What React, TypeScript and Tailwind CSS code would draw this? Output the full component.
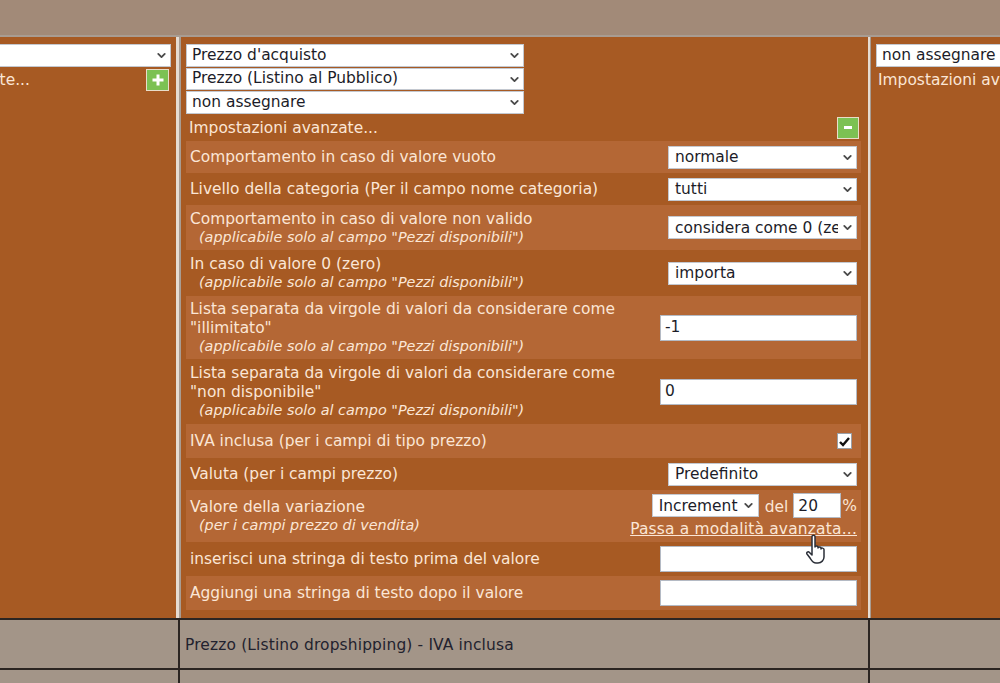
import { ChevronDown } from "lucide-react";
import type { ReactNode } from "react";

const font = "font-['DejaVu_Sans',sans-serif]";

function Select({ value, className, inset }: { value: string; className: string; inset?: boolean }) {
  return (
    <div
      className={`flex shrink-0 items-center overflow-hidden border border-[#c3c8d0] bg-white text-[#1c1c28] ${className}`}
    >
      <span className={`min-w-0 flex-1 overflow-hidden whitespace-nowrap pl-[5px] ${inset ? "pt-[2px] pl-[6px]" : ""}`}>
        {value}
      </span>
      <span className="flex w-[18px] shrink-0 justify-center bg-white">
        <ChevronDown size={13} strokeWidth={3.4} className="text-[#4a4a4a]" />
      </span>
    </div>
  );
}

function TextBox({ value = "", className }: { value?: string; className: string }) {
  return (
    <div className={`flex shrink-0 items-center border border-[#b4bac4] bg-white pl-[4px] text-[#1c1c28] ${className}`}>
      {value}
    </div>
  );
}

function Note({ children }: { children: ReactNode }) {
  return <div className="pl-[9px] text-[14.4px] italic leading-[17px]">{children}</div>;
}

function Row({
  light,
  height,
  children,
  control,
}: {
  light?: boolean;
  height: string;
  children: ReactNode;
  control: ReactNode;
}) {
  return (
    <div className={`flex items-center justify-between pl-[4px] pr-[4px] ${height} ${light ? "bg-[#b46735]" : ""}`}>
      <div className="w-[450px] leading-[19px]">{children}</div>
      {control}
    </div>
  );
}

const applicable = '(applicabile solo al campo "Pezzi disponibili")';

export default function App() {
  return (
    <div className={`h-[683px] w-[1000px] overflow-hidden bg-[#a39588] text-[15.45px] ${font}`}>
      <div className="h-[37px] border-b-2 border-[#a89c92] bg-[#a28a78]" />
      <div className="flex h-[581px] text-[#fbe6d6]">
        <div className="flex w-[176px] shrink-0 flex-col bg-[#a75a23] pt-[7px]">
          <Select value="" className="ml-[-10px] h-[23px] w-[181px]" />
          <div className="flex items-center justify-between pr-[7px] pt-[2px]">
            <span className="ml-[-159px] whitespace-nowrap leading-[21px]">Impostazioni avanzate...</span>
            <span className="flex h-[22px] w-[23px] items-center justify-center border border-[#e9ddc9] bg-[#7cc153]">
              <svg width="14" height="14" viewBox="0 0 14 14">
                <path d="M7 1.5v11M1.5 7h11" stroke="#fff" strokeWidth="3" />
              </svg>
            </span>
          </div>
        </div>
        <div className="w-[5px] shrink-0 border-r-2 border-[#a89c92] bg-[#e6dcd2]" />
        <div className="flex w-[687px] shrink-0 flex-col bg-[#a75a23] pl-[5px] pr-[7px] pt-[7px]">
          <div className="flex flex-col gap-px">
            <Select value="Prezzo d'acquisto" className="h-[23px] w-[338px]" />
            <Select value="Prezzo (Listino al Pubblico)" className="h-[22px] w-[338px]" />
            <Select value="non assegnare" className="h-[23px] w-[338px]" />
          </div>
          <div className="flex h-[27px] items-center justify-between pl-[3px] pr-[2px]">
            <span className="pt-[2px]">Impostazioni avanzate...</span>
            <span className="flex h-[22px] w-[22px] items-center justify-center border border-[#e9ddc9] bg-[#7cc153]">
              <span className="h-[3px] w-[8px] bg-white" />
            </span>
          </div>
          <Row light height="h-[32px]" control={<Select inset value="normale" className="h-[23px] w-[189px]" />}>
            Comportamento in caso di valore vuoto
          </Row>
          <Row height="h-[32px]" control={<Select inset value="tutti" className="h-[23px] w-[189px]" />}>
            Livello della categoria (Per il campo nome categoria)
          </Row>
          <Row light height="h-[45px]" control={<Select inset value="considera come 0 (zero)" className="h-[23px] w-[189px]" />}>
            <div>Comportamento in caso di valore non valido</div>
            <Note>{applicable}</Note>
          </Row>
          <Row height="h-[46px]" control={<Select inset value="importa" className="h-[23px] w-[189px]" />}>
            <div>In caso di valore 0 (zero)</div>
            <Note>{applicable}</Note>
          </Row>
          <Row light height="h-[63px]" control={<TextBox value="-1" className="h-[26px] w-[197px]" />}>
            <div>Lista separata da virgole di valori da considerare come "illimitato"</div>
            <Note>{applicable}</Note>
          </Row>
          <Row height="h-[65px]" control={<TextBox value="0" className="h-[26px] w-[197px]" />}>
            <div>Lista separata da virgole di valori da considerare come "non disponibile"</div>
            <Note>{applicable}</Note>
          </Row>
          <Row
            light
            height="h-[34px]"
            control={
              <span className="mr-[5px] flex h-[16px] w-[15px] items-center justify-center border border-[#9aa0a8] bg-white">
                <svg width="13" height="13" viewBox="0 0 13 13">
                  <path d="M2 7l3 3 6-7" fill="none" stroke="#111" strokeWidth="2.4" />
                </svg>
              </span>
            }
          >
            IVA inclusa (per i campi di tipo prezzo)
          </Row>
          <Row height="h-[32px]" control={<Select inset value="Predefinito" className="h-[23px] w-[189px]" />}>
            Valuta (per i campi prezzo)
          </Row>
          <Row
            light
            height="h-[52px]"
            control={
              <div className="flex flex-col items-end">
                <div className="flex items-center">
                  <Select inset value="Increment" className="h-[23px] w-[107px]" />
                  <span className="ml-[6px] pt-[3px]">del</span>
                  <TextBox value="20" className="ml-[5px] h-[25px] w-[48px] pt-[1px]" />
                  <span className="ml-[1px] pt-[1px]">%</span>
                </div>
                <span className="whitespace-nowrap pt-[1px] leading-[19px] tracking-[0.2px] underline">
                  Passa a modalità avanzata...
                </span>
              </div>
            }
          >
            <div>Valore della variazione</div>
            <Note>(per i campi prezzo di vendita)</Note>
          </Row>
          <Row height="h-[34px]" control={<TextBox className="h-[26px] w-[197px]" />}>
            inserisci una stringa di testo prima del valore
          </Row>
          <Row light height="h-[34px]" control={<TextBox className="h-[26px] w-[197px]" />}>
            Aggiungi una stringa di testo dopo il valore
          </Row>
        </div>
        <div className="w-[3px] shrink-0 border-r border-[#a89c92] bg-[#e6dcd2]" />
        <div className="min-w-0 flex-1 overflow-hidden bg-[#a75a23] pl-[5px] pt-[7px]">
          <Select value="non assegnare" className="h-[23px] w-[338px]" />
          <div className="whitespace-nowrap pl-[2px] pt-[3px] leading-[21px]">Impostazioni avanzate...</div>
        </div>
      </div>
      <div className="flex h-[52px] border-y-2 border-y-[#2b2522] bg-[#a39588] text-[#22222e]">
        <div className="w-[180px] shrink-0 border-r-2 border-[#2b2522]" />
        <div className="flex w-[690px] shrink-0 items-center border-r-2 border-[#2b2522] pl-[5px] pt-[3px] tracking-[0.15px]">
          Prezzo (Listino dropshipping) - IVA inclusa
        </div>
      </div>
      <div className="flex h-[13px] bg-[#a39588]">
        <div className="w-[180px] shrink-0 border-r-2 border-[#2b2522]" />
        <div className="w-[690px] shrink-0 border-r-2 border-[#2b2522]" />
      </div>
      <svg className="absolute left-[806px] top-[534px]" width="22" height="32" viewBox="0 0 22 32">
        <path
          d="M6 2.5c0-1.8 3-1.8 3 0V13c0-1.5 3-1.5 3 0v1c0-1.5 3-1.5 3 0v1c0-1.5 3-1 3 .5V23c0 3-2.5 6-6 6h-2c-3 0-4-2-6-5l-3-4c-1-1.5 1-3 2.5-1.5L6 21z"
          fill="#fff"
          stroke="#2b2f38"
          strokeWidth="1.5"
          strokeLinejoin="round"
        />
      </svg>
    </div>
  );
}
